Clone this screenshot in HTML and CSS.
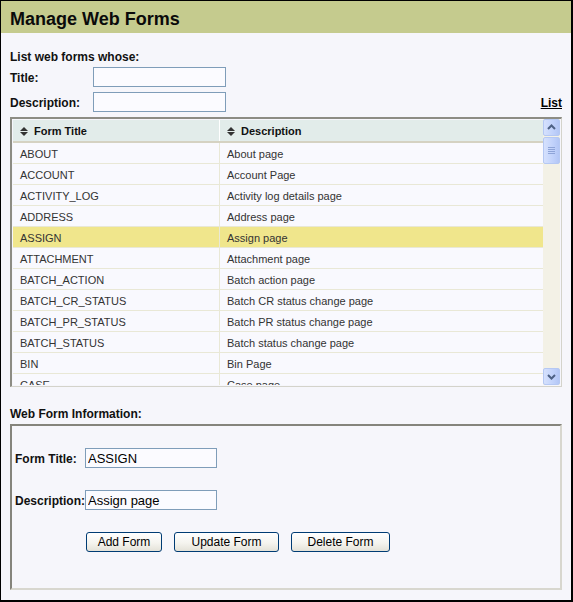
FILE: index.html
```html
<!DOCTYPE html>
<html lang="en">
<head>
    <meta charset="UTF-8">
    <title>Manage Web Forms</title>
    <link rel="stylesheet" href="styles.css">
</head>
<body>
    <div class="page">
        <div class="header">Manage Web Forms</div>

        <div class="content">
            <div class="section-title">List web forms whose:</div>
            <div class="filter-row">
                <label for="fTitle">Title:</label>
                <input type="text" id="fTitle">
            </div>
            <div class="filter-row">
                <label for="fDesc">Description:</label>
                <input type="text" id="fDesc">
                <a href="#" class="list-link">List</a>
            </div>

            <div class="grid-box">
                <div class="grid-scroll">
                    <table class="grid">
                        <thead>
                            <tr>
                                <th class="col-title"><svg class="sort" width="8" height="9" viewBox="0 0 8 9"><polygon points="0,4 4,0 8,4"/><polygon points="0,5 8,5 4,9"/></svg>Form Title</th>
                                <th><svg class="sort" width="8" height="9" viewBox="0 0 8 9"><polygon points="0,4 4,0 8,4"/><polygon points="0,5 8,5 4,9"/></svg>Description</th>
                            </tr>
                        </thead>
                        <tbody>
                            <tr><td class="col-title">ABOUT</td><td>About page</td></tr>
                            <tr><td class="col-title">ACCOUNT</td><td>Account Page</td></tr>
                            <tr><td class="col-title">ACTIVITY_LOG</td><td>Activity log details page</td></tr>
                            <tr><td class="col-title">ADDRESS</td><td>Address page</td></tr>
                            <tr class="selected"><td class="col-title">ASSIGN</td><td>Assign page</td></tr>
                            <tr><td class="col-title">ATTACHMENT</td><td>Attachment page</td></tr>
                            <tr><td class="col-title">BATCH_ACTION</td><td>Batch action page</td></tr>
                            <tr><td class="col-title">BATCH_CR_STATUS</td><td>Batch CR status change page</td></tr>
                            <tr><td class="col-title">BATCH_PR_STATUS</td><td>Batch PR status change page</td></tr>
                            <tr><td class="col-title">BATCH_STATUS</td><td>Batch status change page</td></tr>
                            <tr><td class="col-title">BIN</td><td>Bin Page</td></tr>
                            <tr><td class="col-title">CASE</td><td>Case page</td></tr>
                        </tbody>
                    </table>
                </div>
                <div class="scrollbar">
                    <div class="sb-btn">
                        <svg width="15" height="15" viewBox="0 0 15 15"><polyline points="4,9 7.5,5.5 11,9" /></svg>
                    </div>
                    <div class="sb-thumb">
                        <svg width="15" height="25" viewBox="0 0 15 25">
                            <line x1="4" y1="9.5" x2="11" y2="9.5"/>
                            <line x1="4" y1="11.5" x2="11" y2="11.5"/>
                            <line x1="4" y1="13.5" x2="11" y2="13.5"/>
                            <line x1="4" y1="15.5" x2="11" y2="15.5"/>
                        </svg>
                    </div>
                    <div class="sb-track"></div>
                    <div class="sb-btn">
                        <svg width="15" height="15" viewBox="0 0 15 15"><polyline points="4,6 7.5,9.5 11,6" /></svg>
                    </div>
                </div>
            </div>

            <div class="section-title info-title">Web Form Information:</div>
            <div class="info-box">
                <div class="info-row">
                    <label for="formTitle">Form Title:</label>
                    <input type="text" id="formTitle" value="ASSIGN">
                </div>
                <div class="info-row">
                    <label for="formDesc">Description:</label>
                    <input type="text" id="formDesc" value="Assign page">
                </div>
                <div class="button-row">
                    <button type="button" class="btn-add">Add Form</button>
                    <button type="button" class="btn-update">Update Form</button>
                    <button type="button" class="btn-delete">Delete Form</button>
                </div>
            </div>
        </div>
    </div>
</body>
</html>
```

FILE: styles.css
```css
body {
    margin: 0;
    background-color: #000000;
    font-family: "Liberation Sans", Arial, sans-serif;
}

.page {
    width: 573px;
    height: 602px;
    box-sizing: border-box;
    border: 1px solid #000000;
    border-right-width: 2px;
    border-bottom-width: 2px;
    background-color: #f6f6fb;
}

.header {
    height: 32px;
    box-sizing: border-box;
    padding: 4px 0 0 9px;
    background-color: #c5cb8e;
    font-size: 18px;
    font-weight: bold;
    line-height: 28px;
    color: #0a0a0a;
}

.content {
    padding: 16px 8px 0 9px;
}

.section-title {
    font-size: 12px;
    font-weight: bold;
    line-height: 16px;
    color: #111111;
}

.filter-row {
    display: flex;
    align-items: center;
    height: 20px;
    margin-top: 2px;
}

.filter-row + .filter-row {
    margin-top: 5px;
}

.filter-row label {
    width: 83px;
    padding-top: 1px;
    font-size: 12px;
    font-weight: bold;
    color: #111111;
}

.filter-row input,
.info-row input {
    width: 133px;
    height: 20px;
    box-sizing: border-box;
    margin: 0;
    padding: 0 2px;
    border: 1px solid #7f9db9;
    background-color: #fbfbff;
    font-family: "Liberation Sans", Arial, sans-serif;
    font-size: 13px;
    color: #000000;
}

.list-link {
    margin-left: auto;
    margin-right: 1px;
    padding-top: 1px;
    font-size: 12px;
    font-weight: bold;
    color: #000000;
    text-decoration: underline;
}

/* grid */

.grid-box {
    display: flex;
    width: 552px;
    height: 270px;
    box-sizing: border-box;
    margin-top: 5px;
    border-top: 2px solid #8d8c84;
    border-left: 2px solid #8d8c84;
    border-right: 1px solid #d4d3cb;
    border-bottom: 1px solid #d4d3cb;
    padding: 0 1px 1px 1px;
}

.grid-scroll {
    flex: 1;
    overflow: hidden;
    padding-top: 1px;
}

.grid {
    width: 100%;
    border-collapse: collapse;
    font-size: 11px;
}

.grid th {
    height: 20px;
    padding: 1px 0 0 7px;
    background-color: #e2ecea;
    border-bottom: 2px solid #d5d2c2;
    text-align: left;
    font-weight: bold;
    color: #111111;
}

.grid th.col-title {
    border-right: 1px solid #ffffff;
}

.sort {
    margin-right: 6px;
    vertical-align: -1px;
    fill: #333333;
}

.grid td {
    height: 19px;
    padding: 1px 0 0 7px;
    border-bottom: 1px solid #e9e8d6;
    background-color: #f9f9fe;
    color: #333333;
    white-space: nowrap;
}

.grid .col-title {
    width: 199px;
    border-right: 1px solid #e9e8d6;
}

.grid tr.selected td {
    background-color: #f0e68c;
}

.scrollbar {
    display: flex;
    flex-direction: column;
    width: 17px;
    background-color: #f3f1e6;
}

.sb-btn,
.sb-thumb {
    box-sizing: border-box;
    border: 1px solid #b5c8f3;
    border-radius: 2px;
    background: linear-gradient(to right, #d6e1fd, #c1d2fb 60%, #b3c6f5);
}

.sb-btn {
    height: 17px;
}

.sb-thumb {
    height: 27px;
    margin-top: 1px;
}

.sb-btn svg polyline {
    fill: none;
    stroke: #4d6185;
    stroke-width: 2;
}

.sb-thumb svg line {
    stroke: #8ea4d8;
    stroke-width: 1;
}

.sb-track {
    flex: 1;
}

/* form info */

.info-title {
    margin-top: 19px;
}

.info-box {
    width: 552px;
    height: 166px;
    box-sizing: border-box;
    margin-top: 2px;
    padding: 22px 0 0 3px;
    border-top: 2px solid #85847c;
    border-left: 2px solid #85847c;
    border-right: 2px solid #d8d7cf;
    border-bottom: 2px solid #d8d7cf;
}

.info-row {
    display: flex;
    align-items: center;
    height: 20px;
    margin-bottom: 22px;
}

.info-row label {
    width: 70px;
    padding-top: 1px;
    font-size: 12px;
    font-weight: bold;
    color: #111111;
}

.info-row input {
    width: 132px;
}

.button-row {
    display: flex;
    gap: 12px;
    padding-left: 71px;
}

.button-row button {
    height: 20px;
    padding: 0;
    border: 1px solid #003c74;
    border-radius: 3px;
    background: linear-gradient(#ffffff, #f5f4ef 55%, #e4e2d8);
    font-family: "Liberation Sans", Arial, sans-serif;
    font-size: 12px;
    color: #000000;
    cursor: pointer;
}

.btn-add {
    width: 76px;
}

.btn-update {
    width: 105px;
}

.btn-delete {
    width: 99px;
}
```
